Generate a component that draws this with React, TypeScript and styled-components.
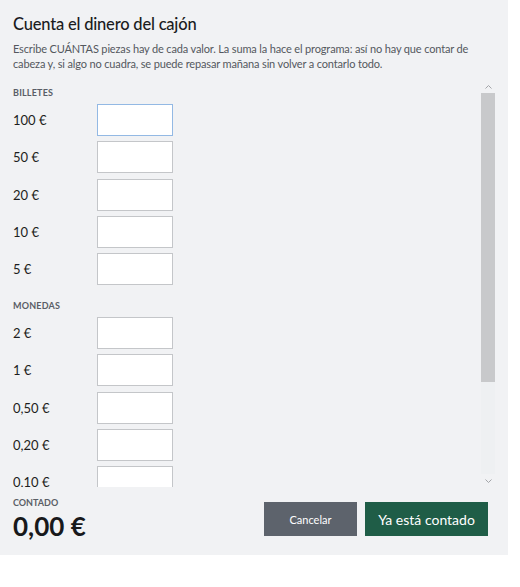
import React, { useState } from "react";
import styled, { createGlobalStyle } from "styled-components";

const GlobalStyle = createGlobalStyle`
  body {
    margin: 0;
    background: #ffffff;
    font-family: Lato, "Noto Sans", "Liberation Sans", sans-serif;
  }
`;

const Panel = styled.div`
  box-sizing: border-box;
  width: 508px;
  height: 555px;
  background: #f1f2f4;
  padding: 12px 13px 12px 13px;
  display: flex;
  flex-direction: column;
`;

const Title = styled.h1`
  margin: 0;
  font-size: 16.5px;
  font-weight: 500;
  letter-spacing: -0.2px;
  color: #1b1c1e;
  line-height: 24px;
`;

const Intro = styled.p`
  margin: 5px 0 0 0;
  font-size: 11px;
  letter-spacing: -0.15px;
  line-height: 15px;
  color: #54585e;
`;

// list + hand-drawn scrollbar side by side
const ScrollArea = styled.div`
  margin-top: 9px;
  flex: 1;
  min-height: 0;
  display: flex;
`;

const List = styled.div`
  flex: 1;
  overflow: hidden;
  padding-top: 7px;
`;

const ScrollBar = styled.div`
  width: 14px;
  display: flex;
  flex-direction: column;
  background: #eef0f2;
`;

const ScrollArrow = styled.div`
  height: 13px;
  display: flex;
  align-items: center;
  justify-content: center;
  background: #f1f2f4;
`;

const ScrollThumb = styled.div`
  height: 289px;
  background: #c8c9cb;
`;

const ScrollRest = styled.div`
  flex: 1;
`;

const SectionLabel = styled.div<{ first?: boolean }>`
  font-size: 9px;
  font-weight: 700;
  letter-spacing: 0.2px;
  line-height: 12px;
  color: #5a5e66;
  text-transform: uppercase;
  margin: ${(p) => (p.first ? "0" : "15px")} 0 5px 0;
`;

const Row = styled.label`
  display: grid;
  grid-template-columns: 84px 76px;
  align-items: center;
  height: 32px;
  margin-bottom: 5.3px;
`;

const RowName = styled.span`
  font-size: 13px;
  color: #1d1e20;
`;

const CountInput = styled.input`
  box-sizing: border-box;
  width: 76px;
  height: 32px;
  border: 1px solid #c4c6c9;
  background: #ffffff;
  text-align: right;
  padding: 0 8px;
  font: inherit;
  font-size: 14px;
  outline: none;
  &:focus {
    border-color: #93b9e4;
  }
`;

const Footer = styled.div`
  display: flex;
  align-items: flex-end;
  justify-content: space-between;
  padding-top: 10px;
  padding-right: 7px;
`;

const TotalBlock = styled.div`
  display: flex;
  flex-direction: column;
`;

const TotalLabel = styled.div`
  font-size: 9px;
  font-weight: 700;
  line-height: 12px;
  color: #5a5e66;
  text-transform: uppercase;
`;

const TotalValue = styled.div`
  font-size: 26px;
  font-weight: 700;
  line-height: 34px;
  color: #18191b;
`;

const Actions = styled.div`
  display: flex;
  gap: 8px;
  margin-bottom: 7px;
`;

const Button = styled.button<{ primary?: boolean }>`
  height: 34px;
  border: none;
  color: #ffffff;
  font-family: inherit;
  cursor: pointer;
  background: ${(p) => (p.primary ? "#1f5d47" : "#5d636c")};
  width: ${(p) => (p.primary ? "123px" : "93px")};
  font-size: ${(p) => (p.primary ? "14px" : "11px")};
`;

const Chevron = ({ up }: { up?: boolean }) => (
  <svg width="7" height="4" viewBox="0 0 7 4">
    <path
      d={up ? "M0.5 3.5 L3.5 0.5 L6.5 3.5" : "M0.5 0.5 L3.5 3.5 L6.5 0.5"}
      fill="none"
      stroke="#a3a5a9"
      strokeWidth="1"
    />
  </svg>
);

const billetes = ["100 €", "50 €", "20 €", "10 €", "5 €"];
const monedas = ["2 €", "1 €", "0,50 €", "0,20 €", "0,10 €", "0,05 €", "0,02 €", "0,01 €"];

export default function App() {
  const [counts, setCounts] = useState<Record<string, string>>({});

  const setCount = (key: string, v: string) => setCounts({ ...counts, [key]: v });

  return (
    <>
      <GlobalStyle />
      <Panel>
        <Title>Cuenta el dinero del cajón</Title>
        <Intro>
          Escribe CUÁNTAS piezas hay de cada valor. La suma la hace el programa: así no hay que contar de
          cabeza y, si algo no cuadra, se puede repasar mañana sin volver a contarlo todo.
        </Intro>
        <ScrollArea>
          <List>
            <SectionLabel first>Billetes</SectionLabel>
            {billetes.map((b, i) => (
              <Row key={b}>
                <RowName>{b}</RowName>
                <CountInput
                  autoFocus={i === 0}
                  value={counts[b] || ""}
                  onChange={(e) => setCount(b, e.target.value)}
                />
              </Row>
            ))}
            <SectionLabel>Monedas</SectionLabel>
            {monedas.map((m) => (
              <Row key={m}>
                <RowName>{m}</RowName>
                <CountInput value={counts[m] || ""} onChange={(e) => setCount(m, e.target.value)} />
              </Row>
            ))}
          </List>
          <ScrollBar>
            <ScrollArrow>
              <Chevron up />
            </ScrollArrow>
            <ScrollThumb />
            <ScrollRest />
            <ScrollArrow>
              <Chevron />
            </ScrollArrow>
          </ScrollBar>
        </ScrollArea>
        <Footer>
          <TotalBlock>
            <TotalLabel>Contado</TotalLabel>
            <TotalValue>0,00 €</TotalValue>
          </TotalBlock>
          <Actions>
            <Button>Cancelar</Button>
            <Button primary>Ya está contado</Button>
          </Actions>
        </Footer>
      </Panel>
    </>
  );
}
